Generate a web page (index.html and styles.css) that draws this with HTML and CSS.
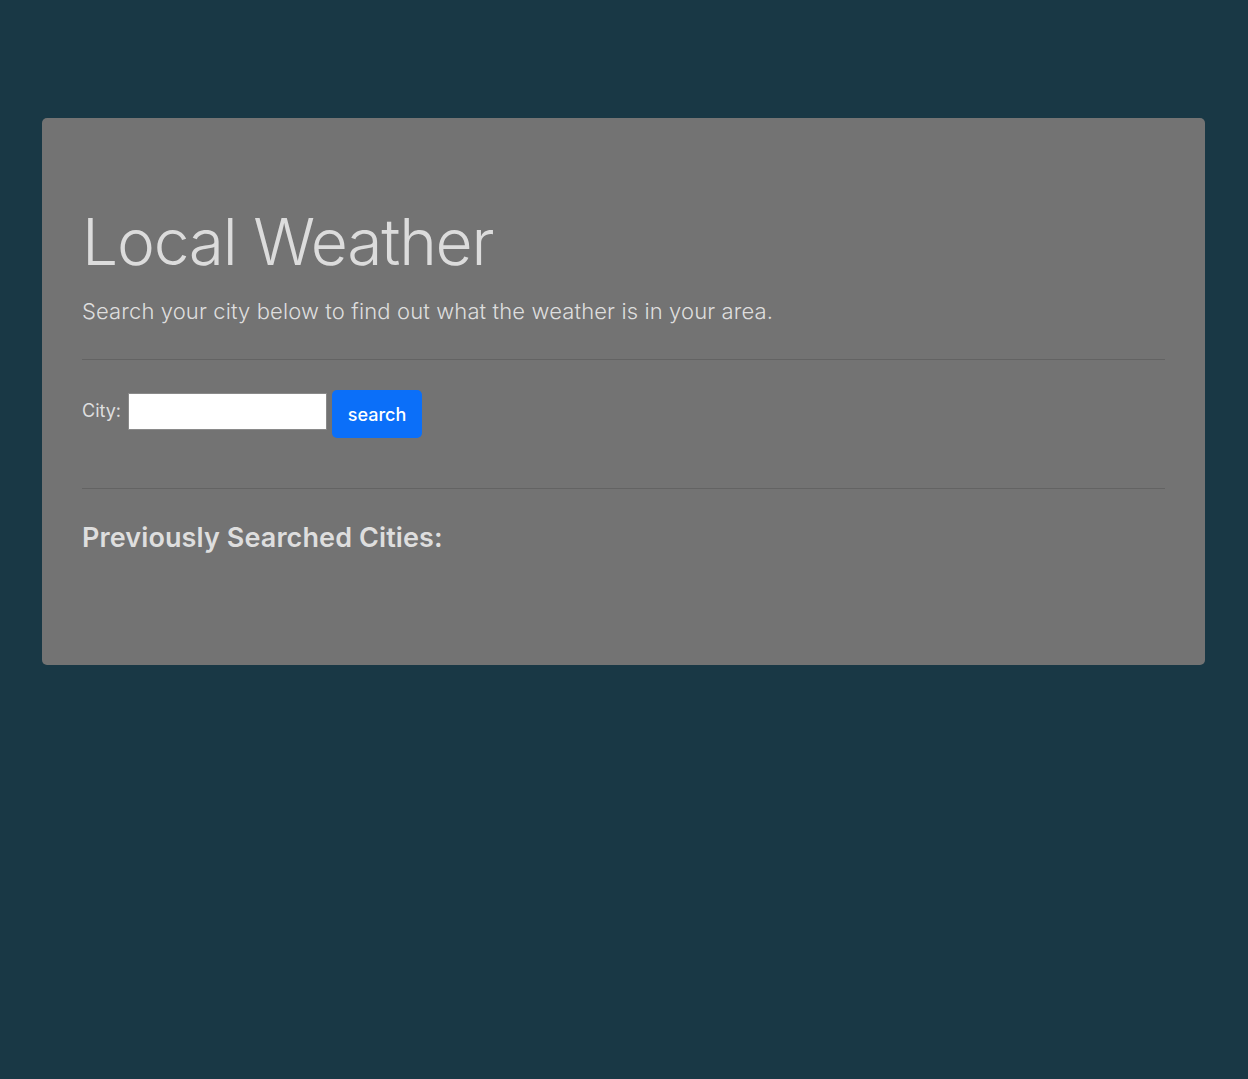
FILE: index.html
```html
<!DOCTYPE html>
<html lang="en">
<head>
<meta charset="utf-8">
<title>Local Weather</title>
<link rel="stylesheet" href="styles.css">
</head>
<body>
<main class="page">
  <section class="jumbotron">
    <h1 class="title">Local Weather</h1>
    <p class="lead">Search your city below to find out what the weather is in your area.</p>
    <hr class="rule">
    <form class="search-form">
      <label class="city-label" for="city">City:</label>
      <input class="city-input" id="city" type="text">
      <button class="search-btn" type="button">search</button>
    </form>
    <hr class="rule rule-second">
    <h3 class="history-title">Previously Searched Cities:</h3>
    <ul class="history-list"></ul>
  </section>
</main>
</body>
</html>
```

FILE: styles.css
```css
html, body {
  margin: 0;
  padding: 0;
}
body {
  background: #193845;
  font-family: Inter, "Open Sans", "Liberation Sans", sans-serif;
  color: #d9d9d9;
  min-height: 1079px;
}
.page {
  padding: 118px 43px 0 42px;
}
.jumbotron {
  background: #737373;
  border-radius: 5px;
  padding: 92px 40px 40px 40px;
  height: 547px;
  box-sizing: border-box;
}
.title {
  margin: 0;
  font-size: 64px;
  font-weight: 300;
  line-height: 1;
  letter-spacing: -1.2px;
  color: #dcdcdc;
}
.lead {
  margin: 24px 0 0 0;
  font-size: 22px;
  font-weight: 300;
  line-height: 1.2;
  letter-spacing: 0.12px;
  color: #dedede;
}
.rule {
  margin: 35px 0 0 0;
  border: 0;
  border-top: 1px solid #636363;
}
.search-form {
  display: flex;
  align-items: flex-start;
  margin-top: 30px;
}
.city-label {
  font-size: 18px;
  line-height: 22px;
  color: #dedede;
  margin: 10px 7px 0 0;
}
.city-input {
  width: 199px;
  height: 37px;
  box-sizing: border-box;
  border: 1px solid #8a8a8a;
  background: #fff;
  margin: 3px 5px 0 0;
  padding: 0;
}
.search-btn {
  width: 90px;
  height: 48px;
  border: 0;
  border-radius: 5px;
  background: #0b6ff9;
  color: #fff;
  font-family: inherit;
  font-size: 18px;
  font-weight: 500;
  padding: 0;
}
.rule-second {
  margin-top: 50px;
}
.history-title {
  margin: 35px 0 0 0;
  font-size: 27px;
  font-weight: 600;
  line-height: 1;
  letter-spacing: 0.1px;
  color: #dedede;
}
.history-list {
  margin: 0;
  padding: 0;
}
```
